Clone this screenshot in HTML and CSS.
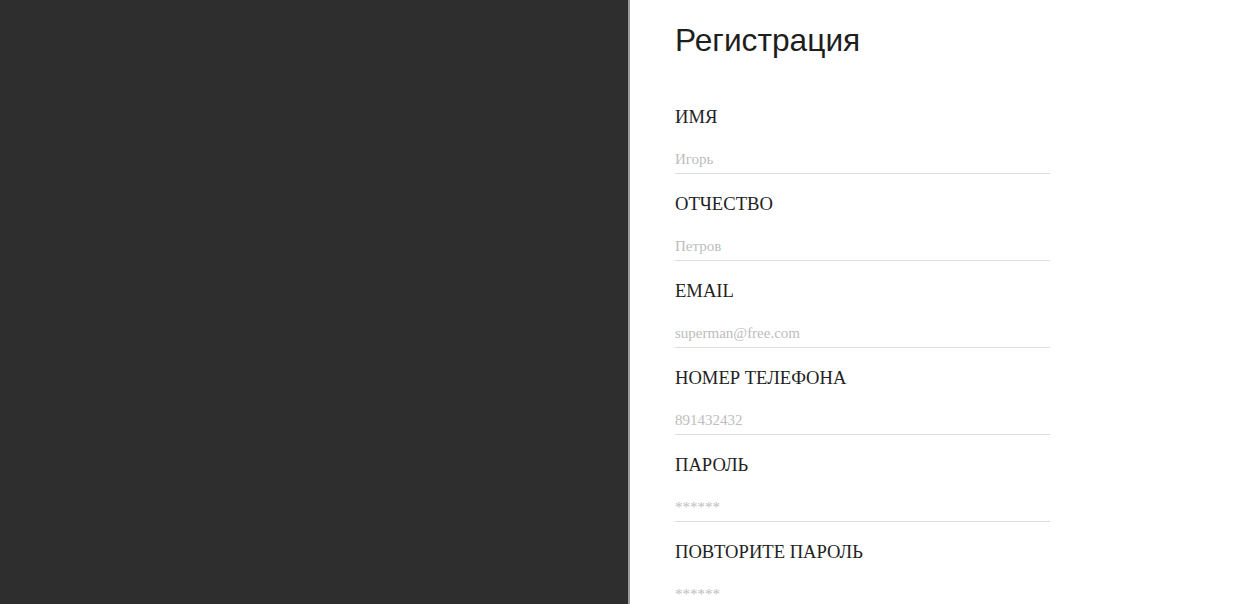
FILE: index.html
```html
<!DOCTYPE html>
<html lang="ru">
<head>
<meta charset="utf-8">
<title>Регистрация</title>
<link rel="stylesheet" href="styles.css">
</head>
<body>
<div class="layout">
  <aside class="side"></aside>
  <main class="main">
    <h1 class="title">Регистрация</h1>
    <form class="form">
      <div class="field">
        <label class="label" for="f1">Имя</label>
        <input class="input" id="f1" type="text" placeholder="Игорь">
      </div>
      <div class="field">
        <label class="label" for="f2">Отчество</label>
        <input class="input" id="f2" type="text" placeholder="Петров">
      </div>
      <div class="field">
        <label class="label" for="f3">Email</label>
        <input class="input" id="f3" type="text" placeholder="superman@free.com">
      </div>
      <div class="field">
        <label class="label" for="f4">Номер телефона</label>
        <input class="input" id="f4" type="text" placeholder="891432432">
      </div>
      <div class="field">
        <label class="label" for="f5">Пароль</label>
        <input class="input" id="f5" type="text" placeholder="******">
      </div>
      <div class="field">
        <label class="label" for="f6">Повторите пароль</label>
        <input class="input" id="f6" type="text" placeholder="******">
      </div>
    </form>
  </main>
</div>
</body>
</html>
```

FILE: styles.css
```css
html, body {
  margin: 0;
  padding: 0;
  height: 100%;
  overflow: hidden;
  background: #ffffff;
}

.layout {
  display: grid;
  grid-template-columns: 630px 1fr;
  min-height: 100vh;
}

.side {
  background: #2e2e2e;
  border-right: 2px solid #9a9a9a;
}

.main {
  padding: 0 0 0 45px;
}

.title {
  margin: 0;
  padding-top: 20px;
  font-family: "Liberation Sans", Arial, sans-serif;
  font-weight: normal;
  font-size: 31.7px;
  line-height: 40px;
  color: #1e1e1e;
}

.form {
  display: flex;
  flex-direction: column;
  width: 375px;
  padding-top: 47px;
}

.field {
  display: flex;
  flex-direction: column;
  padding-bottom: 20px;
}

.label {
  font-family: "Liberation Serif", "Times New Roman", serif;
  font-size: 18.6px;
  line-height: 20px;
  text-transform: uppercase;
  color: #222222;
}

.input {
  margin-top: 22px;
  height: 20px;
  padding: 0 0 4px 0;
  border: none;
  border-bottom: 1px solid #dddddd;
  outline: none;
  font-family: "Liberation Serif", "Times New Roman", serif;
  font-size: 15px;
  color: #333333;
  background: transparent;
}

.input::placeholder {
  color: #bdbdbd;
}
```
